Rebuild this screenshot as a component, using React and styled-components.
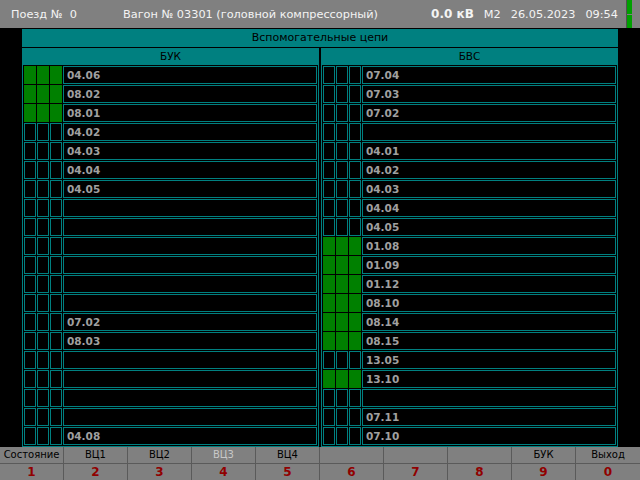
import React from 'react'
import styled, { createGlobalStyle } from 'styled-components'

const GlobalStyle = createGlobalStyle`
  html, body {
    margin: 0;
    padding: 0;
    background: #000;
  }
  body {
    font-family: "DejaVu Sans", Verdana, sans-serif;
    font-size: 11px;
  }
`;

const Screen = styled.div`
  width: 640px;
  height: 480px;
  background: #000;
  display: flex;
  flex-direction: column;
  overflow: hidden;
`;

const Header = styled.div`
  height: 28px;
  background: #808080;
  color: #f4f4f4;
  display: flex;
  align-items: center;
  font-size: 11.3px;
  margin-bottom: 1px;
`;

const TrainNo = styled.div`
  width: 112px;
  padding-left: 11px;
  white-space: pre;
`;

const Wagon = styled.div`
  flex: 1;
`;

const Status = styled.div`
  display: flex;
  gap: 10px;
  align-items: center;
`;

const Voltage = styled.span`
  font-weight: bold;
  font-size: 12px;
`;

const Indicator = styled.div`
  margin-left: 8px;
  margin-right: 8px;
  width: 5px;
  height: 28px;
  display: flex;
  flex-direction: column;
  gap: 1px;
  border-left: 1px solid #505050;
`;

const IndicatorPart = styled.div`
  flex: 1;
  background: #00a000;
`;

const Panel = styled.div`
  margin-left: 22px;
  width: 596px;
  display: flex;
  flex-direction: column;
`;

const PanelTitle = styled.div`
  height: 18px;
  line-height: 18px;
  background: #008080;
  color: #000;
  text-align: center;
  font-size: 11px;
  border-bottom: 1px solid #000;
`;

const Columns = styled.div`
  display: grid;
  grid-template-columns: 297px 297px;
  column-gap: 2px;
`;

const Section = styled.div`
  display: flex;
  flex-direction: column;
`;

const SectionTitle = styled.div`
  height: 17px;
  line-height: 17px;
  background: #008080;
  color: #000;
  text-align: center;
  font-size: 10.5px;
`;

const SectionBody = styled.div`
  background: #000;
  border: 1px solid #008080;
  border-top: none;
  padding: 1px;
  display: flex;
  flex-direction: column;
  gap: 1px;
`;

const Row = styled.div`
  height: 18px;
  display: flex;
  gap: 1px;
`;

const Cell = styled.div`
  width: 12px;
  box-sizing: border-box;
  border: 1px solid ${p => (p.$on ? '#008000' : '#008080')};
  background: ${p => (p.$on ? '#008000' : '#000')};
`;

const Label = styled.div`
  flex: 1;
  box-sizing: border-box;
  border: 1px solid #008080;
  padding-left: 3px;
  line-height: 16px;
  color: #a0a0a0;
  font-weight: bold;
  font-size: 10.5px;
`;

const Footer = styled.div`
  display: grid;
  grid-template-columns: repeat(10, 64px);
  background: #808080;
  height: 33px;
`;

const Key = styled.div`
  display: flex;
  flex-direction: column;
  box-sizing: border-box;
  border-right: ${p => (p.$last ? 'none' : '1px solid #5a5a5a')};
`;

const KeyLabel = styled.div`
  height: 16px;
  line-height: 16px;
  text-align: center;
  border-bottom: 1px solid #5a5a5a;
  color: ${p => (p.$dim ? '#c8c8c8' : '#000')};
  font-size: 10px;
`;

const KeyNum = styled.div`
  height: 16px;
  line-height: 16px;
  text-align: center;
  color: #900000;
  font-weight: bold;
  font-size: 12px;
`;

const buk = [
  ['04.06', 3], ['08.02', 3], ['08.01', 3], ['04.02', 0], ['04.03', 0],
  ['04.04', 0], ['04.05', 0], ['', 0], ['', 0], ['', 0],
  ['', 0], ['', 0], ['', 0], ['07.02', 0], ['08.03', 0],
  ['', 0], ['', 0], ['', 0], ['', 0], ['04.08', 0],
];

const bvs = [
  ['07.04', 0], ['07.03', 0], ['07.02', 0], ['', 0], ['04.01', 0],
  ['04.02', 0], ['04.03', 0], ['04.04', 0], ['04.05', 0], ['01.08', 3],
  ['01.09', 3], ['01.12', 3], ['08.10', 3], ['08.14', 3], ['08.15', 3],
  ['13.05', 0], ['13.10', 3], ['', 0], ['07.11', 0], ['07.10', 0],
];

const keys = [
  ['Состояние', '1'], ['ВЦ1', '2'], ['ВЦ2', '3'], ['ВЦ3', '4', true], ['ВЦ4', '5'],
  ['', '6'], ['', '7'], ['', '8'], ['БУК', '9'], ['Выход', '0'],
];

const CircuitList = ({ title, rows }) => (
  <Section>
    <SectionTitle>{title}</SectionTitle>
    <SectionBody>
      {rows.map(([name, on], i) => (
        <Row key={i}>
          {[0, 1, 2].map(c => <Cell key={c} $on={c < on} />)}
          <Label>{name}</Label>
        </Row>
      ))}
    </SectionBody>
  </Section>
);

export default function App() {
  return (
    <Screen>
      <GlobalStyle />
      <Header>
        <TrainNo>{'Поезд №  0'}</TrainNo>
        <Wagon>Вагон № 03301 (головной компрессорный)</Wagon>
        <Status>
          <Voltage>0.0 кВ</Voltage>
          <span>М2</span>
          <span>26.05.2023</span>
          <span>09:54</span>
        </Status>
        <Indicator>
          <IndicatorPart />
          <IndicatorPart />
        </Indicator>
      </Header>
      <Panel>
        <PanelTitle>Вспомогательные цепи</PanelTitle>
        <Columns>
          <CircuitList title="БУК" rows={buk} />
          <CircuitList title="БВС" rows={bvs} />
        </Columns>
      </Panel>
      <Footer>
        {keys.map(([label, num, dim], i) => (
          <Key key={i} $last={i === keys.length - 1}>
            <KeyLabel $dim={dim}>{label}</KeyLabel>
            <KeyNum>{num}</KeyNum>
          </Key>
        ))}
      </Footer>
    </Screen>
  )
}
